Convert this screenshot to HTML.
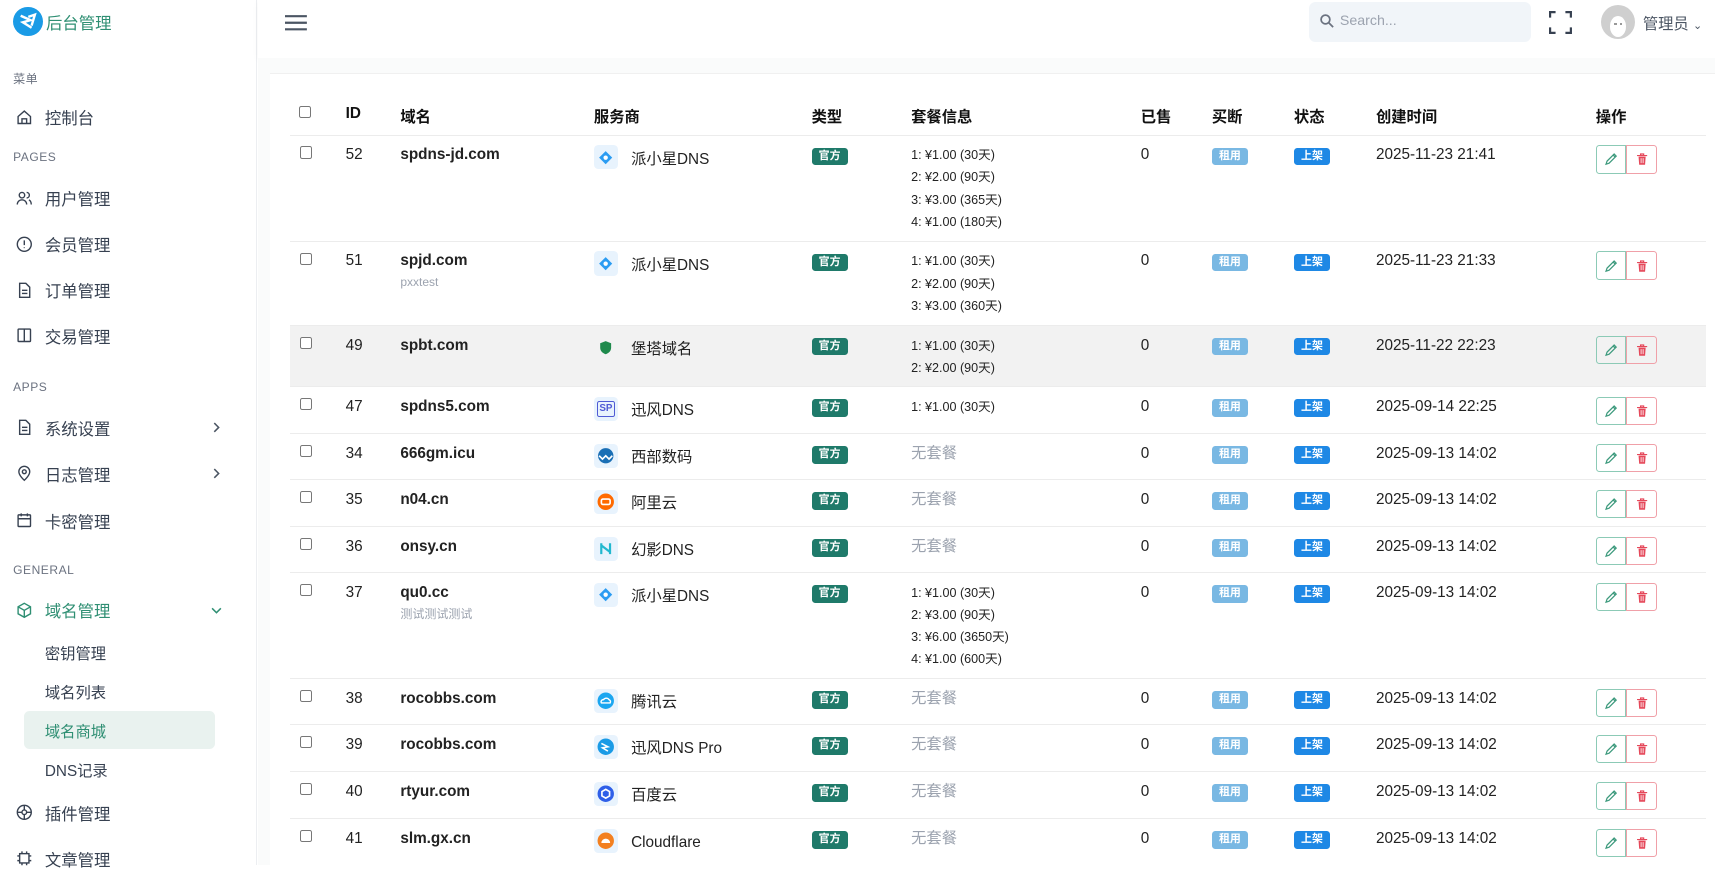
<!DOCTYPE html>
<html><head><meta charset="utf-8">
<style>
html{zoom:1.09375}
*{box-sizing:border-box;margin:0;padding:0}
body{width:1568px;height:791px;overflow:hidden;background:#fff;font-family:"Liberation Sans","Noto Sans CJK SC",sans-serif;color:#222;position:relative}
.sb{position:absolute;left:0;top:0;width:235px;height:791px;background:#fff;border-right:1px solid #eceef1}
.logo{position:absolute;left:12px;top:6px;width:27px;height:27px;border-radius:50%;background:#1a9be6}
.brand{position:absolute;left:42px;top:9px;font-size:15px;color:#2f8f73}
.sec{position:absolute;left:12px;font-size:11px;color:#6b7280;letter-spacing:.5px}
.it{position:absolute;left:14px;font-size:15px;color:#374151;display:flex;align-items:center;height:22px}
.it svg{width:17px;height:17px;margin-right:10px;stroke:#374151;fill:none;stroke-width:1.8}
.chev{position:absolute;left:193px;width:10px;height:10px}
.sub{position:absolute;left:41px;font-size:14px;color:#374151}
.hdr{position:absolute;left:236px;top:0;width:1332px;height:53px;background:#fff;box-shadow:0 2px 6px rgba(0,0,0,.04)}
.gap{position:absolute;left:236px;top:53px;width:1332px;height:15px;background:#fafbfb;border-bottom:1px solid #f0f0f0}
.lstrip{position:absolute;left:236px;top:53px;width:11px;height:738px;background:#fafbfb}
.search{position:absolute;left:1197px;top:2px;width:203px;height:36px;background:#f1f5f9;border-radius:6px;font-size:13px;color:#9ca3af;padding:10px 0 0 28px}
.th{position:absolute;top:96px;font-size:14px;font-weight:bold;color:#111}
.row{position:absolute;left:265px;width:1295px;border-top:1px solid #ececec}
.c{position:absolute;top:9px;font-size:14px;line-height:18px}
.cb{position:absolute;left:9px;top:10px;width:11px;height:11px;border:1px solid #777;border-radius:2px;background:#fff}
.dm{left:101px;font-weight:bold}
.dm small{display:block;font-weight:normal;font-size:11px;color:#9ca3af;margin-top:2px}
.pv{position:absolute;left:278px;top:9px;width:22px;height:22px;border-radius:4px;background:#e8f3fd;display:flex;align-items:center;justify-content:center}
.pt{left:312px;top:13px}
.bd{position:absolute;top:11px;height:16px;border-radius:3px;color:#fff;font-size:10px;font-weight:bold;line-height:16px;text-align:center}
.gf{left:477px;width:33px;background:#1f7a6a}
.zy{left:843px;width:33px;background:#79b8e3}
.sj{left:918px;width:33px;background:#1e88e5}
.pl{left:568px;font-size:11.5px;line-height:20.3px;top:8px}
.no{left:568px;color:#9ca3af;top:9px}
.btn{position:absolute;top:9px;width:28px;height:26px;border:1px solid #8ccab6;border-radius:3px 0 0 3px;left:1194px;display:flex;align-items:center;justify-content:center}
.btn.d{left:1222px;border-color:#f0a0a8;border-radius:0 3px 3px 0}
</style></head><body>
<svg width="0" height="0" style="position:absolute"><defs>
<symbol id="pen" viewBox="0 0 14 14"><path d="M2 12l1-3 7-7 2 2-7 7zM9 3l2 2" stroke="#3d9a7d" stroke-width="1.2" fill="none"/></symbol>
<symbol id="bin" viewBox="0 0 14 14"><path d="M2 3.5h10M5.5 3.5V2h3v1.5" stroke="#e5485a" stroke-width="1.2" fill="none"/><path d="M3.5 4.5h7l-.6 8h-5.8z" fill="#e5485a"/><path d="M6 6v5M8 6v5" stroke="#fff" stroke-width=".8"/></symbol>
<symbol id="rc" viewBox="0 0 10 10"><path d="M3 1l4 4-4 4" stroke="#4b5563" stroke-width="1.4" fill="none"/></symbol>
</defs></svg>
<div class="sb">
<div class="logo"><svg width="27" height="27" viewBox="0 0 27 27"><path d="M7 8l9 4-7 2 8 5M14 9l6-2-3 10" stroke="#fff" stroke-width="2.2" fill="none"/></svg></div>
<div class="brand">后台管理</div>
<div class="sec" style="top:64px">菜单</div>
<div class="it" style="top:96px"><svg viewBox="0 0 24 24"><path d="M4 11l8-7 8 7v9H4zM9 20v-6h6v6"/></svg>控制台</div>
<div class="sec" style="top:137px">PAGES</div>
<div class="it" style="top:170px"><svg viewBox="0 0 24 24"><circle cx="9" cy="8" r="3.5"/><path d="M3 20c0-4 3-6 6-6s6 2 6 6M15 4.5a3.5 3.5 0 010 7M18 14c2 1 3 3 3 6"/></svg>用户管理</div>
<div class="it" style="top:212px"><svg viewBox="0 0 24 24"><circle cx="12" cy="12" r="9"/><path d="M12 7v6M12 16v1"/></svg>会员管理</div>
<div class="it" style="top:254px"><svg viewBox="0 0 24 24"><path d="M6 3h8l5 5v13H6zM9 12h7M9 16h7"/></svg>订单管理</div>
<div class="it" style="top:296px"><svg viewBox="0 0 24 24"><rect x="4" y="4" width="16" height="16" rx="1"/><path d="M12 4v16"/></svg>交易管理</div>
<div class="sec" style="top:347px">APPS</div>
<div class="it" style="top:380px"><svg viewBox="0 0 24 24"><path d="M6 3h8l5 5v13H6zM9 12h7M9 16h7"/></svg>系统设置</div><svg class="chev" style="top:386px"><use href="#rc"/></svg>
<div class="it" style="top:422px"><svg viewBox="0 0 24 24"><path d="M12 21s-7-6-7-11a7 7 0 0114 0c0 5-7 11-7 11z"/><circle cx="12" cy="10" r="2.5"/></svg>日志管理</div><svg class="chev" style="top:428px"><use href="#rc"/></svg>
<div class="it" style="top:465px"><svg viewBox="0 0 24 24"><rect x="4" y="5" width="16" height="15" rx="1"/><path d="M4 10h16M8 3v4M16 3v4"/></svg>卡密管理</div>
<div class="sec" style="top:515px">GENERAL</div>
<div class="it" style="top:547px;color:#2f8f73"><svg viewBox="0 0 24 24" style="stroke:#2f8f73"><path d="M12 3l8 4.5v9L12 21l-8-4.5v-9zM4 7.5l8 4.5 8-4.5M12 12v9"/></svg>域名管理</div><svg class="chev" style="top:553px" viewBox="0 0 10 10"><path d="M1 3l4 4 4-4" stroke="#2f8f73" stroke-width="1.4" fill="none"/></svg>
<div class="sub" style="top:587px">密钥管理</div>
<div class="sub" style="top:623px">域名列表</div>
<div style="position:absolute;left:22px;top:650px;width:175px;height:35px;background:#e9f2ef;border-radius:5px"></div>
<div class="sub" style="top:658px;color:#2f8f73">域名商城</div>
<div class="sub" style="top:694px">DNS记录</div>
<div class="it" style="top:732px"><svg viewBox="0 0 24 24"><circle cx="12" cy="12" r="9"/><circle cx="12" cy="12" r="3"/><path d="M12 3v6M21 12h-6M12 21v-6M3 12h6"/></svg>插件管理</div>
<div class="it" style="top:774px"><svg viewBox="0 0 24 24"><rect x="6" y="6" width="12" height="12"/><path d="M9 3v3M15 3v3M9 18v3M15 18v3M3 9h3M3 15h3M18 9h3M18 15h3"/></svg>文章管理</div>
</div>
<div class="hdr">
<svg style="position:absolute;left:25px;top:13px" width="20" height="16" viewBox="0 0 20 16"><path d="M0 2h20M0 8h20M0 14h20" stroke="#4b5563" stroke-width="2"/></svg>
</div>
<div class="gap"></div><div class="lstrip"></div>
<div class="search"><svg style="position:absolute;left:10px;top:11px" width="13" height="13" viewBox="0 0 13 13"><circle cx="5" cy="5" r="4" stroke="#6b7280" stroke-width="1.6" fill="none"/><path d="M8 8l4 4" stroke="#6b7280" stroke-width="1.6"/></svg>Search...</div>
<svg style="position:absolute;left:1416px;top:10px" width="21" height="21" viewBox="0 0 21 21" fill="none" stroke="#374151" stroke-width="2"><path d="M1 6V1h5M15 1h5v5M20 15v5h-5M6 20H1v-5"/></svg>
<div style="position:absolute;left:1464px;top:5px;width:31px;height:31px;border-radius:50%;background:#cfcfcf;overflow:hidden"><div style="position:absolute;left:8px;top:10px;width:15px;height:19px;border-radius:50%;background:#fff"></div><div style="position:absolute;left:12px;top:16px;width:2px;height:2px;background:#999"></div><div style="position:absolute;left:17px;top:16px;width:2px;height:2px;background:#999"></div></div>
<div style="position:absolute;left:1502px;top:11px;font-size:14px;color:#4b5563">管理员 <span style="font-size:10px">⌄</span></div>

<div class="th" style="left:273px;top:97px"><div class="cb" style="position:static"></div></div>
<div class="th" style="left:316px">ID</div><div class="th" style="left:366px">域名</div><div class="th" style="left:543px">服务商</div><div class="th" style="left:742px">类型</div><div class="th" style="left:833px">套餐信息</div><div class="th" style="left:1043px">已售</div><div class="th" style="left:1108px">买断</div><div class="th" style="left:1183px">状态</div><div class="th" style="left:1258px">创建时间</div><div class="th" style="left:1459px">操作</div>

<div class="row" style="top:123px;height:97px"><div class="cb"></div><div class="c" style="left:51px">52</div><div class="c dm">spdns-jd.com</div><div class="pv"><svg width="14" height="14" viewBox="0 0 14 14"><path d="M7 1l6 6-6 6-6-6z" fill="#2b9cf2"/><circle cx="7" cy="7" r="2" fill="#fff"/></svg></div><div class="c pt">派小星DNS</div><div class="bd gf">官方</div><div class="c pl">1: ¥1.00 (30天)<br>2: ¥2.00 (90天)<br>3: ¥3.00 (365天)<br>4: ¥1.00 (180天)</div><div class="c" style="left:778px">0</div><div class="bd zy">租用</div><div class="bd sj">上架</div><div class="c" style="left:993px">2025-11-23 21:41</div><div class="btn"><svg width="13" height="13"><use href="#pen"/></svg></div><div class="btn d"><svg width="13" height="13"><use href="#bin"/></svg></div></div>

<div class="row" style="top:220px;height:77px"><div class="cb"></div><div class="c" style="left:51px">51</div><div class="c dm">spjd.com<small>pxxtest</small></div><div class="pv"><svg width="14" height="14" viewBox="0 0 14 14"><path d="M7 1l6 6-6 6-6-6z" fill="#2b9cf2"/><circle cx="7" cy="7" r="2" fill="#fff"/></svg></div><div class="c pt">派小星DNS</div><div class="bd gf">官方</div><div class="c pl">1: ¥1.00 (30天)<br>2: ¥2.00 (90天)<br>3: ¥3.00 (360天)</div><div class="c" style="left:778px">0</div><div class="bd zy">租用</div><div class="bd sj">上架</div><div class="c" style="left:993px">2025-11-23 21:33</div><div class="btn"><svg width="13" height="13"><use href="#pen"/></svg></div><div class="btn d"><svg width="13" height="13"><use href="#bin"/></svg></div></div>

<div class="row" style="top:297px;height:56px;background:#f2f2f2"><div class="cb"></div><div class="c" style="left:51px">49</div><div class="c dm">spbt.com</div><div class="pv" style="background:transparent"><svg width="14" height="14" viewBox="0 0 14 14"><path d="M7 1l5 2v4c0 3-2 5-5 6-3-1-5-3-5-6V3z" fill="#1f8a4c"/></svg></div><div class="c pt">堡塔域名</div><div class="bd gf">官方</div><div class="c pl">1: ¥1.00 (30天)<br>2: ¥2.00 (90天)</div><div class="c" style="left:778px">0</div><div class="bd zy">租用</div><div class="bd sj">上架</div><div class="c" style="left:993px">2025-11-22 22:23</div><div class="btn"><svg width="13" height="13"><use href="#pen"/></svg></div><div class="btn d"><svg width="13" height="13"><use href="#bin"/></svg></div></div>

<div class="row" style="top:353px;height:43px"><div class="cb"></div><div class="c" style="left:51px">47</div><div class="c dm">spdns5.com</div><div class="pv"><div style="border:1.5px solid #4f5bd5;border-radius:2px;color:#4f5bd5;font-size:9px;font-weight:bold;padding:0 1px;line-height:12px">SP</div></div><div class="c pt">迅风DNS</div><div class="bd gf">官方</div><div class="c pl">1: ¥1.00 (30天)</div><div class="c" style="left:778px">0</div><div class="bd zy">租用</div><div class="bd sj">上架</div><div class="c" style="left:993px">2025-09-14 22:25</div><div class="btn"><svg width="13" height="13"><use href="#pen"/></svg></div><div class="btn d"><svg width="13" height="13"><use href="#bin"/></svg></div></div>

<div class="row" style="top:396px;height:42px"><div class="cb"></div><div class="c" style="left:51px">34</div><div class="c dm">666gm.icu</div><div class="pv"><svg width="16" height="16" viewBox="0 0 16 16"><circle cx="8" cy="8" r="7" fill="#1a6fb5"/><path d="M2 8l3 3 3-3 3 3 3-3" stroke="#fff" stroke-width="1.5" fill="none"/></svg></div><div class="c pt">西部数码</div><div class="bd gf">官方</div><div class="c no">无套餐</div><div class="c" style="left:778px">0</div><div class="bd zy">租用</div><div class="bd sj">上架</div><div class="c" style="left:993px">2025-09-13 14:02</div><div class="btn"><svg width="13" height="13"><use href="#pen"/></svg></div><div class="btn d"><svg width="13" height="13"><use href="#bin"/></svg></div></div>

<div class="row" style="top:438px;height:43px"><div class="cb"></div><div class="c" style="left:51px">35</div><div class="c dm">n04.cn</div><div class="pv"><svg width="16" height="16" viewBox="0 0 16 16"><circle cx="8" cy="8" r="7.5" fill="#ff6a00"/><rect x="4" y="5.5" width="8" height="5" rx="1.5" stroke="#fff" stroke-width="1.5" fill="none"/></svg></div><div class="c pt">阿里云</div><div class="bd gf">官方</div><div class="c no">无套餐</div><div class="c" style="left:778px">0</div><div class="bd zy">租用</div><div class="bd sj">上架</div><div class="c" style="left:993px">2025-09-13 14:02</div><div class="btn"><svg width="13" height="13"><use href="#pen"/></svg></div><div class="btn d"><svg width="13" height="13"><use href="#bin"/></svg></div></div>

<div class="row" style="top:481px;height:42px"><div class="cb"></div><div class="c" style="left:51px">36</div><div class="c dm">onsy.cn</div><div class="pv"><svg width="14" height="14" viewBox="0 0 14 14"><path d="M3 2v10M3 4l8 6M11 2v10" stroke="#22b8cf" stroke-width="2" fill="none"/></svg></div><div class="c pt">幻影DNS</div><div class="bd gf">官方</div><div class="c no">无套餐</div><div class="c" style="left:778px">0</div><div class="bd zy">租用</div><div class="bd sj">上架</div><div class="c" style="left:993px">2025-09-13 14:02</div><div class="btn"><svg width="13" height="13"><use href="#pen"/></svg></div><div class="btn d"><svg width="13" height="13"><use href="#bin"/></svg></div></div>

<div class="row" style="top:523px;height:97px"><div class="cb"></div><div class="c" style="left:51px">37</div><div class="c dm">qu0.cc<small>测试测试测试</small></div><div class="pv"><svg width="14" height="14" viewBox="0 0 14 14"><path d="M7 1l6 6-6 6-6-6z" fill="#2b9cf2"/><circle cx="7" cy="7" r="2" fill="#fff"/></svg></div><div class="c pt">派小星DNS</div><div class="bd gf">官方</div><div class="c pl">1: ¥1.00 (30天)<br>2: ¥3.00 (90天)<br>3: ¥6.00 (3650天)<br>4: ¥1.00 (600天)</div><div class="c" style="left:778px">0</div><div class="bd zy">租用</div><div class="bd sj">上架</div><div class="c" style="left:993px">2025-09-13 14:02</div><div class="btn"><svg width="13" height="13"><use href="#pen"/></svg></div><div class="btn d"><svg width="13" height="13"><use href="#bin"/></svg></div></div>

<div class="row" style="top:620px;height:42px"><div class="cb"></div><div class="c" style="left:51px">38</div><div class="c dm">rocobbs.com</div><div class="pv"><svg width="16" height="16" viewBox="0 0 16 16"><circle cx="8" cy="8" r="7.5" fill="#1ba6f0"/><path d="M4 10a2 2 0 012-3 3 3 0 015 0 2 2 0 011 3z" stroke="#fff" stroke-width="1.3" fill="none"/></svg></div><div class="c pt">腾讯云</div><div class="bd gf">官方</div><div class="c no">无套餐</div><div class="c" style="left:778px">0</div><div class="bd zy">租用</div><div class="bd sj">上架</div><div class="c" style="left:993px">2025-09-13 14:02</div><div class="btn"><svg width="13" height="13"><use href="#pen"/></svg></div><div class="btn d"><svg width="13" height="13"><use href="#bin"/></svg></div></div>

<div class="row" style="top:662px;height:43px"><div class="cb"></div><div class="c" style="left:51px">39</div><div class="c dm">rocobbs.com</div><div class="pv"><svg width="16" height="16" viewBox="0 0 16 16"><circle cx="8" cy="8" r="7.5" fill="#1a9be6"/><path d="M4 5l6 3-5 1 5 3" stroke="#fff" stroke-width="1.4" fill="none"/></svg></div><div class="c pt">迅风DNS Pro</div><div class="bd gf">官方</div><div class="c no">无套餐</div><div class="c" style="left:778px">0</div><div class="bd zy">租用</div><div class="bd sj">上架</div><div class="c" style="left:993px">2025-09-13 14:02</div><div class="btn"><svg width="13" height="13"><use href="#pen"/></svg></div><div class="btn d"><svg width="13" height="13"><use href="#bin"/></svg></div></div>

<div class="row" style="top:705px;height:43px"><div class="cb"></div><div class="c" style="left:51px">40</div><div class="c dm">rtyur.com</div><div class="pv"><svg width="16" height="16" viewBox="0 0 16 16"><circle cx="8" cy="8" r="7.5" fill="#2f5fe8"/><path d="M8 4l3.5 2v4L8 12 4.5 10V6z" stroke="#fff" stroke-width="1.5" fill="none"/></svg></div><div class="c pt">百度云</div><div class="bd gf">官方</div><div class="c no">无套餐</div><div class="c" style="left:778px">0</div><div class="bd zy">租用</div><div class="bd sj">上架</div><div class="c" style="left:993px">2025-09-13 14:02</div><div class="btn"><svg width="13" height="13"><use href="#pen"/></svg></div><div class="btn d"><svg width="13" height="13"><use href="#bin"/></svg></div></div>

<div class="row" style="top:748px;height:43px"><div class="cb"></div><div class="c" style="left:51px">41</div><div class="c dm">slm.gx.cn</div><div class="pv"><svg width="16" height="16" viewBox="0 0 16 16"><circle cx="8" cy="8" r="7.5" fill="#f38020"/><path d="M4 10a4 4 0 018 0z" fill="#fff"/></svg></div><div class="c pt">Cloudflare</div><div class="bd gf">官方</div><div class="c no">无套餐</div><div class="c" style="left:778px">0</div><div class="bd zy">租用</div><div class="bd sj">上架</div><div class="c" style="left:993px">2025-09-13 14:02</div><div class="btn"><svg width="13" height="13"><use href="#pen"/></svg></div><div class="btn d"><svg width="13" height="13"><use href="#bin"/></svg></div></div>
</body></html>
